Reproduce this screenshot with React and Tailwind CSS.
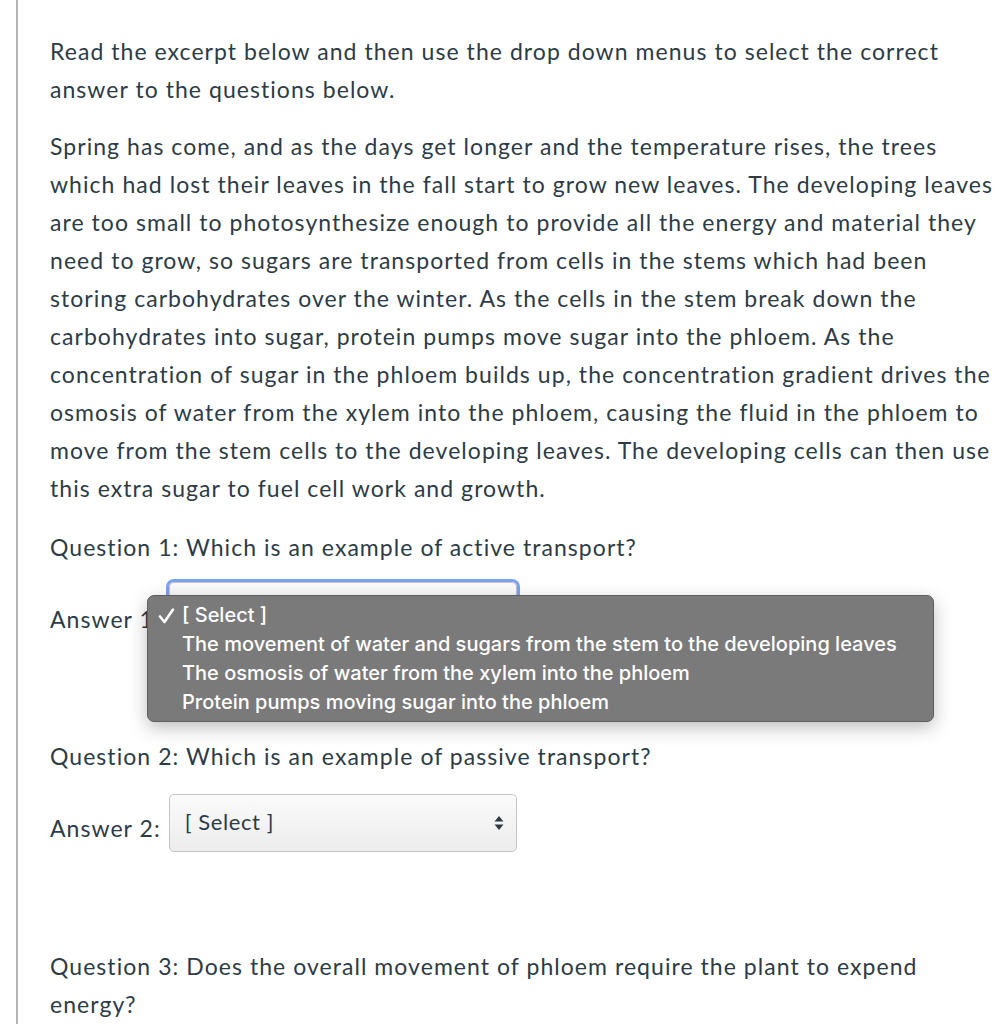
import React from 'react';

const passage =
  'Spring has come, and as the days get longer and the temperature rises, the trees which had lost their leaves in the fall start to grow new leaves. The developing leaves are too small to photosynthesize enough to provide all the energy and material they need to grow, so sugars are transported from cells in the stems which had been storing carbohydrates over the winter. As the cells in the stem break down the carbohydrates into sugar, protein pumps move sugar into the phloem. As the concentration of sugar in the phloem builds up, the concentration gradient drives the osmosis of water from the xylem into the phloem, causing the fluid in the phloem to move from the stem cells to the developing leaves. The developing cells can then use this extra sugar to fuel cell work and growth.';

const options = [
  'The movement of water and sugars from the stem to the developing leaves',
  'The osmosis of water from the xylem into the phloem',
  'Protein pumps moving sugar into the phloem',
];

function Arrows() {
  return (
    <svg width="10" height="16" viewBox="0 0 10 16" className="shrink-0">
      <path d="M5 1 L9.5 6.5 L0.5 6.5 Z" fill="#2d3b45" />
      <path d="M5 15 L9.5 9.5 L0.5 9.5 Z" fill="#2d3b45" />
    </svg>
  );
}

function SelectBox({ focused }) {
  return (
    <div
      className={
        'w-[348px] h-[58px] shrink-0 rounded-[5px] border border-[#c4c4c4] bg-gradient-to-b from-[#fbfbfb] to-[#ececec] flex items-center justify-between pl-[15px] pr-[12px] ' +
        (focused ? 'ring-[3px] ring-[#7ba2f0]' : '')
      }
    >
      <span className="text-[22px] tracking-[0.6px] text-[#2d3b45] -mt-[2px]">[ Select ]</span>
      <Arrows />
    </div>
  );
}

export default function App() {
  return (
    <div className="w-[1002px] h-[1024px] overflow-hidden bg-white" style={{ fontFamily: 'Lato, "Open Sans", sans-serif' }}>
      <div className="ml-[16px] h-full border-l-2 border-[#b3b3b3] pl-[32px] pt-[32px] text-[23px] tracking-[1.05px] leading-[38px] text-[#2d3b45]">
        <p className="mb-[19px]">
          Read the excerpt below and then use the drop down menus to select the correct answer to the questions below.
        </p>
        <p className="mb-[21px]">{passage}</p>
        <p>Question 1: Which is an example of active transport?</p>

        {/* answer 1 with open menu */}
        <div className="relative mt-[16px] flex items-start gap-[8px]">
          <span className="mt-[18px] whitespace-nowrap">Answer 1:</span>
          <SelectBox focused />
          <div
            className="absolute left-[97px] top-[13px] w-[787px] h-[127px] rounded-[7px] border border-[#5f5f5f] bg-[#7a7a7a] shadow-[0_6px_18px_rgba(0,0,0,0.25)] pt-[5px] pl-[10px] text-white font-medium text-[20px] tracking-normal leading-[29px]"
            style={{ fontFamily: 'Inter, "Liberation Sans", sans-serif' }}
          >
            <div className="flex items-center">
              <svg width="24" height="18" viewBox="0 0 24 18" className="shrink-0">
                <path d="M2 9.5 L6.5 15 L15 2.5" fill="none" stroke="#fff" strokeWidth="2.6" strokeLinecap="round" strokeLinejoin="round" />
              </svg>
              <span>[ Select ]</span>
            </div>
            {options.map((o) => (
              <div key={o} className="pl-[24px] whitespace-nowrap">
                {o}
              </div>
            ))}
          </div>
        </div>

        <p className="mt-[97px]">Question 2: Which is an example of passive transport?</p>

        <div className="mt-[19px] flex items-start gap-[8px]">
          <span className="mt-[15px] whitespace-nowrap">Answer 2:</span>
          <SelectBox />
        </div>

        <p className="mt-[95px]">Question 3: Does the overall movement of phloem require the plant to expend energy?</p>
      </div>
    </div>
  );
}
